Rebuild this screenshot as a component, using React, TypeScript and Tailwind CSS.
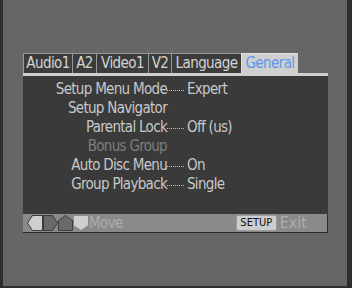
import React from 'react';

const font = { fontFamily: '"DejaVu Sans Condensed", "DejaVu Sans", sans-serif' };

const tabs = [
  { label: 'Audio1', w: 'w-[49px]' },
  { label: 'A2', w: 'w-[24px]' },
  { label: 'Video1', w: 'w-[52px]' },
  { label: 'V2', w: 'w-[23px]' },
  { label: 'Language', w: 'w-[70px]' },
];

const rows = [
  { label: 'Setup Menu Mode', value: 'Expert' },
  { label: 'Setup Navigator', value: '' },
  { label: 'Parental Lock', value: 'Off (us)' },
  { label: 'Bonus Group', value: '', dim: true },
  { label: 'Auto Disc Menu', value: 'On' },
  { label: 'Group Playback', value: 'Single' },
];

function Arrows() {
  return (
    <svg width="62" height="16" viewBox="0 0 62 16" className="shrink-0">
      <polygon points="0.5,8 5.5,0.5 15.5,0.5 15.5,15.5 5.5,15.5" fill="#cfcfcf" stroke="#3a3a3a" />
      <polygon points="16.5,0.5 25.5,0.5 30.5,8 25.5,15.5 16.5,15.5" fill="#6a6a6a" stroke="#3a3a3a" />
      <polygon points="31.5,5.5 38.5,0.5 45.5,5.5 45.5,15.5 31.5,15.5" fill="#6a6a6a" stroke="#3a3a3a" />
      <polygon points="46.5,0.5 61.5,0.5 61.5,10.5 54,15.5 46.5,10.5" fill="#cfcfcf" stroke="#8a8a8a" />
    </svg>
  );
}

export default function App() {
  return (
    <div className="w-[352px] h-[288px] bg-[#2e2e2e] flex" style={font}>
      <div className="ml-[3px] w-[344px] h-[286px] bg-[#666666] pt-[53px] pl-[20px]">
        <div className="w-[305px] flex flex-col">
          {/* Tabs */}
          <div className="flex h-[20px]">
            {tabs.map((t) => (
              <div
                key={t.label}
                className={`${t.w} h-full bg-[#3c3c3c] border-t border-l border-[#9a9a9a] text-[#d4d4d4] text-[15px] tracking-[-0.6px] leading-[19px] text-center`}
              >
                {t.label}
              </div>
            ))}
            <div className="w-[57px] h-full bg-[#cfcfcf] border-t border-l border-[#e0e0e0] text-[#5c98ee] text-[15px] tracking-[-0.6px] leading-[19px] text-center">
              General
            </div>
          </div>
          <div className="h-[3px] bg-[#cfcfcf]" />

          {/* Body */}
          <div className="h-[138px] bg-[#3a3a3a] pt-[4px] flex flex-col">
            {rows.map((r) => (
              <div key={r.label} className="flex items-center h-[19px] text-[15px] tracking-[-0.7px]">
                <div className={`w-[144px] text-right ${r.dim ? 'text-[#7e7e7e]' : 'text-[#c8c8c8]'}`}>{r.label}</div>
                {r.value ? (
                  <>
                    <div className="w-[17px] h-0 border-t border-dotted border-[#bdbdbd] mt-[1px]" />
                    <div className="ml-[3px] text-[#c8c8c8]">{r.value}</div>
                  </>
                ) : null}
              </div>
            ))}
          </div>

          {/* Footer */}
          <div className="h-[19px] bg-[#8a8a8a] border-b border-r border-[#2e2e2e] flex items-center pl-[4px] pr-[20px]">
            <Arrows />
            <span className="text-[15px] tracking-[-0.6px] text-[#adadad]">Move</span>
            <div className="ml-auto flex items-center">
              <span className="h-[16px] w-[41px] bg-[#cdcdcd] rounded-[2px] border border-[#9a9a9a] text-[11px] leading-[14px] text-[#111] text-center">
                SETUP
              </span>
              <span className="ml-[3px] text-[16px] text-[#adadad]">Exit</span>
            </div>
          </div>
        </div>
      </div>
    </div>
  );
}
